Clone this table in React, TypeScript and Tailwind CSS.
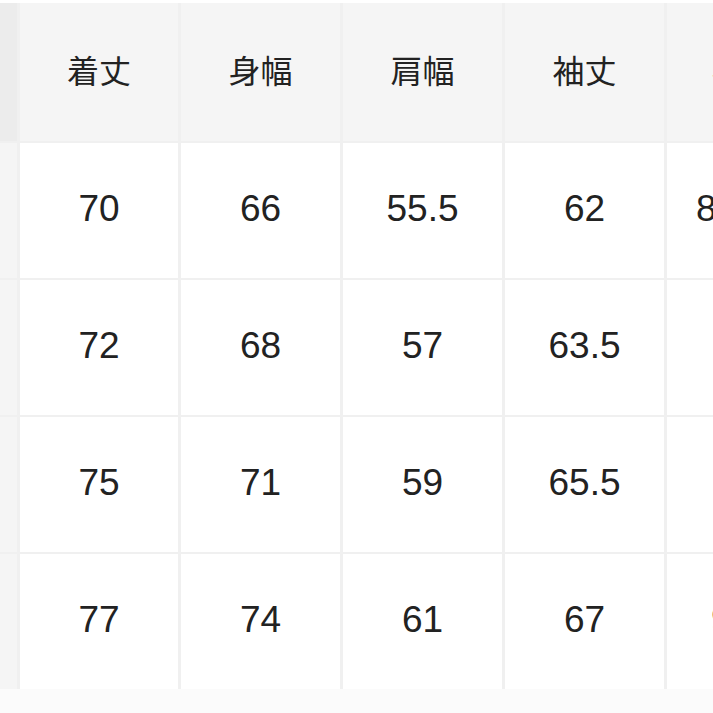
import React from "react";

const headers = ["着丈", "身幅", "肩幅", "袖丈"];

const rows = [
  { values: ["70", "66", "55.5", "62"], extra: "84.5", pad: "pl-[29px]" },
  { values: ["72", "68", "57", "63.5"], extra: "87", pad: "pl-[48px]" },
  { values: ["75", "71", "59", "65.5"], extra: "89", pad: "pl-[48px]" },
  { values: ["77", "74", "61", "67"], extra: "92", pad: "pl-[44px]" },
];

const jp = "font-['Noto_Sans_CJK_JP','Noto_Sans',sans-serif]";
const num = "font-['Liberation_Sans',Arial,sans-serif]";

export default function App() {
  return (
    <div className="w-[713px] h-[713px] overflow-hidden bg-[#fbfbfb]">
      <div className="h-[3px] bg-white" />
      <div className="grid w-[840px] grid-cols-[17px_158px_159px_159px_159px_130px] grid-rows-[138px_135px_135px_135px_135px] gap-x-[3px] gap-y-[2px] bg-[#f0f0f0]">
        {/* header row */}
        <div className="bg-[#ececec]" />
        {headers.map((h) => (
          <div
            key={h}
            className={`flex items-center justify-center bg-[#f5f5f5] pb-[7px] text-[32px] text-[#222] ${jp}`}
          >
            {h}
          </div>
        ))}
        <div
          className={`flex items-center justify-start bg-[#f5f5f5] pb-[7px] pl-[45px] text-[32px] text-[#222] whitespace-nowrap ${jp}`}
        >
          裄丈
        </div>

        {/* body rows */}
        {rows.map((r, i) => (
          <React.Fragment key={i}>
            <div className="bg-[#f5f5f5]" />
            {r.values.map((v, j) => (
              <div
                key={j}
                className={`flex items-center justify-center bg-white pb-[3px] text-[37px] text-[#222] ${num}`}
              >
                {v}
              </div>
            ))}
            <div
              className={`flex items-center justify-start bg-white pb-[3px] text-[37px] text-[#222] whitespace-nowrap ${r.pad} ${num}`}
            >
              {r.extra}
            </div>
          </React.Fragment>
        ))}
      </div>
    </div>
  );
}
